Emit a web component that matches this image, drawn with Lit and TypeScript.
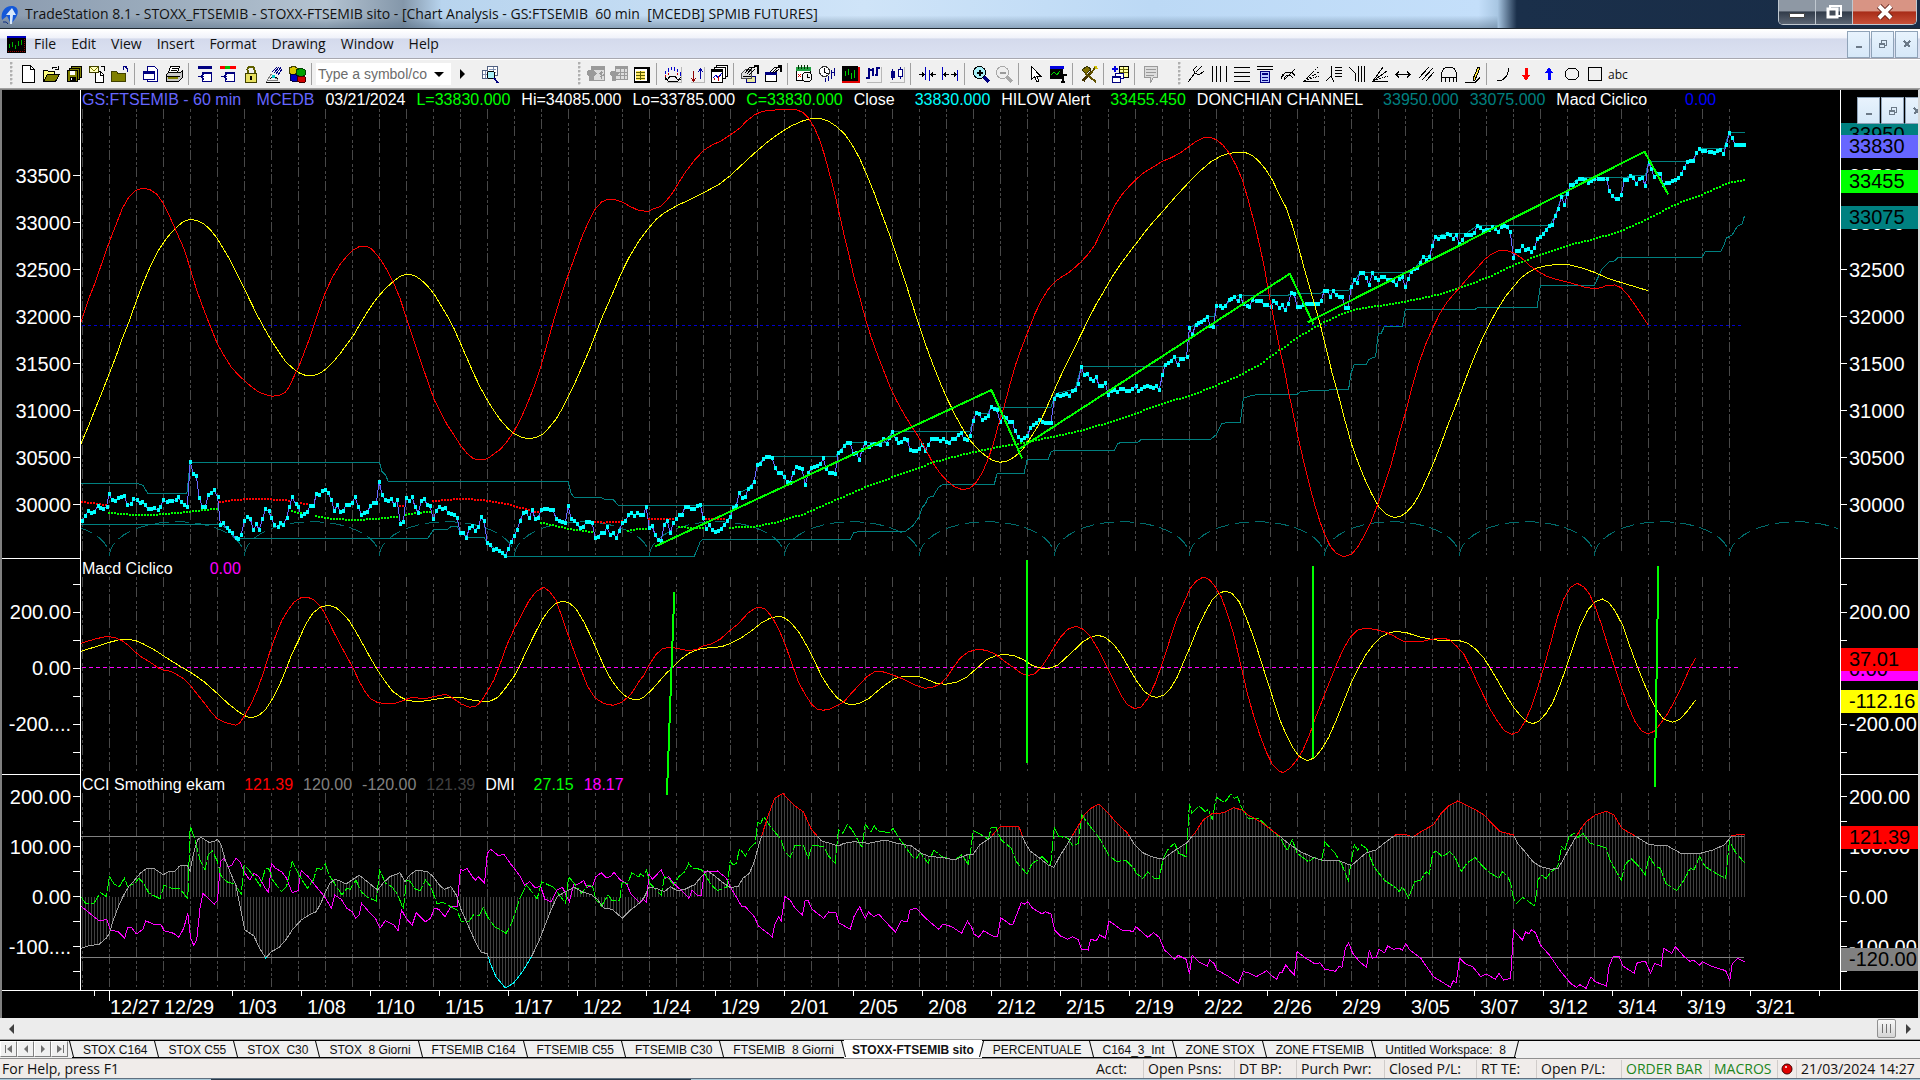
import { LitElement, html, svg, css, nothing } from "lit";
import { customElement, property } from "lit/decorators.js";

type Pt = [number, number];

/* ------------------------------------------------------------------ */
/* Series data                                                         */
/* Curves are digitised in three sheets, 640 plot pixels wide each,    */
/* at 2.45 horizontal and 3 vertical units per plot pixel.             */
/* ------------------------------------------------------------------ */
const UX = 2.45;
const UY = 3;
const PRICE_TOP = 100;
const LOWER_TOP = 550;

function sheet(index: number, top: number, raw: string): Pt[] {
  return raw
    .trim()
    .split(/\s+/)
    .map((pair) => {
      const [x, y] = pair.split(",").map(Number);
      return [index * 640 + x / UX, top + y / UY] as Pt;
    });
}

function series(top: number, ...raw: string[]): Pt[] {
  return raw.flatMap((part, i) => sheet(i, top, part));
}

const RED_PRICE = series(
  PRICE_TOP,
  `198,668 216,600 234,545 252,480 268,425 284,375 300,325 316,290 332,272 348,265 366,268 384,282 400,310 416,350 434,400 452,450 467,510 482,570 498,625 514,675 532,730 548,765 566,800 584,825 600,843 616,860 632,875 650,884 667,889 684,886 698,878 708,862 722,825 732,800 746,755 760,710 772,665 784,620 798,575 815,530 832,495 850,468 864,451 880,440 896,438 910,446 930,474 948,510 964,548 980,595 996,655 1012,715 1030,780 1048,845 1064,900 1080,938 1096,975 1112,1005 1128,1035 1144,1060 1160,1076 1178,1080 1194,1076 1210,1062 1226,1048 1242,1025 1260,993 1278,950 1294,905 1310,855 1326,795 1342,725 1358,655 1374,590 1392,525 1410,465 1426,410 1442,365 1458,328 1474,306 1490,297 1508,299 1524,306 1545,320 1566,332`,
  `20,334 34,326 50,320 66,300 80,278 96,245 112,215 134,180 156,151 178,134 200,122 222,104 244,85 262,62 280,45 296,36 310,32 340,29 384,29 400,38 414,56 428,85 440,120 452,165 464,220 476,275 488,340 500,405 512,465 524,530 538,590 552,655 566,710 582,765 598,815 614,865 630,905 648,945 666,980 684,1014 700,1048 716,1085 734,1118 752,1142 770,1160 790,1169 808,1165 822,1150 838,1120 852,1080 866,1030 878,975 892,920 906,855 920,795 936,740 952,690 968,640 984,600 1000,568 1018,544 1034,530 1050,518 1066,502 1082,484 1098,462 1114,436 1130,395 1148,352 1164,315 1182,282 1198,260 1214,240 1232,220 1256,202 1280,184 1300,174 1322,160 1346,139 1364,123 1380,114 1396,112 1412,119 1428,135 1444,160 1460,195 1476,240 1490,300 1504,365 1518,435 1530,505 1542,590 1555,670 1567,745`,
  `10,805 20,870 32,940 44,1010 56,1075 70,1145 84,1210 98,1265 110,1305 124,1340 138,1360 156,1370 176,1362 190,1342 206,1308 222,1268 240,1212 256,1155 272,1095 290,1010 308,935 324,860 340,790 358,730 376,680 392,640 410,605 426,582 442,560 460,534 480,508 500,480 516,464 534,453 552,451 572,458 592,474 612,497 632,514 652,528 676,538 700,545 724,553 748,562 770,566 786,563 802,556 820,555 836,563 852,585 870,615 886,645 902,675`
);

const YELLOW_PRICE = series(
  PRICE_TOP,
  `198,1032 216,980 234,925 252,870 268,820 284,770 300,715 316,665 334,603 352,545 370,495 386,455 402,425 418,400 434,380 450,364 467,358 484,362 500,372 516,390 532,415 548,448 564,480 582,525 598,565 614,605 632,650 650,690 668,728 684,757 700,785 716,803 732,818 748,826 766,827 782,821 798,808 816,786 834,760 850,733 866,706 882,672 898,640 914,610 930,585 946,564 962,546 980,529 998,522 1014,526 1030,538 1046,556 1064,583 1080,616 1096,648 1112,685 1130,735 1146,780 1162,825 1178,865 1194,900 1210,932 1226,960 1244,985 1260,1001 1278,1012 1296,1016 1314,1012 1330,1002 1346,982 1362,958 1378,925 1396,880 1412,840 1428,795 1444,750 1460,700 1476,650 1492,605 1508,560 1524,515 1542,470 1567,420`,
  `20,386 40,358 60,338 90,317 122,299 156,278 195,252 222,226 250,194 280,160 310,128 340,101 370,78 400,62 424,55 444,56 462,64 482,80 502,103 520,135 538,175 556,225 574,280 592,340 610,400 628,465 646,530 664,600 682,670 700,735 718,795 736,850 754,900 772,945 790,985 808,1020 826,1045 844,1065 862,1080 882,1087 902,1082 920,1068 938,1048 956,1015 974,980 992,935 1010,885 1028,835 1046,790 1064,745 1082,700 1100,655 1118,612 1136,575 1156,532 1176,495 1196,462 1216,430 1246,382 1280,335 1312,290 1346,245 1372,213 1400,184 1424,168 1444,160 1464,157 1486,159 1502,168 1518,186 1534,210 1550,242 1567,286`,
  `16,325 30,375 44,435 58,500 72,560 86,620 100,680 114,750 128,820 144,890 160,965 176,1035 192,1090 208,1138 224,1180 242,1220 260,1243 278,1252 294,1250 310,1237 326,1215 342,1182 358,1140 376,1090 392,1040 410,980 426,930 442,880 460,820 478,765 496,715 514,670 532,630 552,590 572,560 590,534 610,516 630,504 652,497 680,493 710,495 740,504 770,517 806,536 850,553 902,572`
);

const CLOSE = series(
  PRICE_TOP,
  `201,1262 209,1248 216,1232 224,1240 231,1236 239,1218 246,1225 253,1227 261,1220 267,1182 275,1200 282,1202 290,1195 305,1187 312,1216 320,1212 327,1198 335,1200 342,1210 349,1205 356,1214 363,1228 378,1225 386,1230 393,1222 400,1200 408,1206 415,1203 430,1200 437,1192 444,1206 452,1215 459,1221 466,1087 474,1122 481,1128 488,1193 496,1222 503,1220 510,1185 518,1180 525,1170 533,1192 540,1275 547,1270 555,1285 569,1300 577,1315 584,1318 591,1304 599,1262 606,1252 613,1256 621,1290 628,1272 635,1290 643,1258 650,1228 658,1232 665,1255 672,1275 680,1282 687,1268 694,1275 702,1254 709,1220 716,1192 724,1212 731,1222 738,1248 753,1235 760,1218 768,1218 775,1182 782,1185 790,1174 797,1170 804,1178 812,1200 819,1234 826,1215 834,1237 841,1232 848,1215 856,1216 863,1208 870,1192 878,1220 885,1244 892,1240 900,1236 907,1218 914,1208 922,1208 929,1145 936,1185 944,1200 951,1202 958,1197 966,1214 973,1200 981,1273 988,1265 995,1193 1003,1204 1010,1192 1017,1222 1025,1238 1032,1204 1039,1198 1047,1214 1054,1218 1061,1258 1069,1232 1076,1220 1083,1226 1091,1224 1098,1240 1113,1246 1120,1254 1128,1298 1135,1298 1142,1315 1150,1285 1157,1278 1164,1292 1172,1280 1179,1252 1186,1262 1194,1328 1201,1335 1208,1350 1216,1348 1223,1352 1230,1360 1238,1368 1245,1346 1252,1325 1260,1308 1267,1290 1274,1262 1282,1240 1289,1235 1296,1255 1304,1230 1311,1256 1318,1254 1326,1230 1333,1226 1341,1227 1348,1230 1355,1230 1363,1258 1370,1262 1377,1266 1385,1270 1392,1218 1399,1256 1407,1262 1414,1272 1421,1285 1429,1280 1436,1266 1451,1268 1458,1314 1465,1310 1473,1300 1480,1298 1487,1282 1495,1305 1502,1300 1510,1314 1517,1292 1524,1270 1532,1264 1539,1246 1546,1238 1554,1248 1561,1240`,
  `1,1246 8,1245 15,1220 23,1285 30,1278 37,1304 45,1320 52,1322 59,1275 67,1262 74,1300 81,1270 89,1258 96,1245 103,1244 110,1222 118,1220 125,1226 132,1228 140,1219 148,1216 155,1255 162,1288 170,1275 177,1290 184,1296 192,1292 199,1288 206,1275 214,1262 221,1250 229,1225 236,1218 243,1178 251,1195 258,1190 265,1166 272,1160 280,1145 287,1095 295,1092 302,1078 309,1070 317,1072 324,1074 331,1104 339,1120 346,1120 353,1132 361,1145 368,1148 375,1118 383,1100 390,1104 397,1106 405,1155 412,1120 420,1105 427,1100 434,1098 442,1092 449,1075 456,1106 464,1118 471,1120 478,1122 486,1058 493,1052 500,1038 508,1028 515,1030 523,1062 530,1060 537,1080 544,1050 552,1028 560,1042 567,1034 574,1032 589,1034 596,1018 604,1032 611,1015 618,996 626,1018 633,1028 640,1026 648,1018 655,1020 662,1050 670,1052 677,1052 684,1046 692,1034 699,1052 706,1035 714,1018 728,1016 736,1024 743,1017 750,1026 758,1028 765,1017 772,1016 780,1004 787,998 794,1018 802,1020 809,1008 816,962 824,940 831,942 838,960 846,955 853,948 860,922 868,928 875,930 882,965 890,952 897,955 904,966 912,965 919,994 926,1010 934,1020 941,1014 949,1008 956,985 963,975 971,970 978,960 985,966 993,968 1000,968 1007,968 1015,898 1022,884 1029,888 1037,886 1044,882 1051,888 1059,874 1066,870 1073,852 1081,800 1088,824 1096,822 1103,838 1110,842 1118,832 1125,858 1132,858 1140,848 1147,885 1155,872 1162,870 1169,876 1177,868 1184,868 1191,872 1199,874 1206,868 1214,858 1221,874 1228,868 1236,860 1243,858 1250,862 1258,864 1265,858 1272,870 1280,825 1287,794 1294,790 1302,784 1309,772 1317,795 1324,778 1331,776 1339,770 1346,684 1353,705 1361,675 1368,668 1375,666 1383,660 1390,650 1397,678 1405,682 1412,618 1420,618 1427,625 1434,618 1442,600 1449,598 1456,590 1464,604 1471,588 1478,612 1486,618 1493,620 1500,600 1508,602 1515,604 1522,604 1530,616 1537,615 1545,620 1552,602 1559,608 1566,624`,
  `5,615 12,630 20,612 27,580 35,583 42,620 50,620 57,614 64,612 72,612 79,612 86,611 94,612 101,602 108,572 116,572 123,590 130,574 138,586 145,590 152,590 160,624 167,624 174,562 182,540 189,548 196,518 204,518 211,535 218,555 226,520 233,534 241,540 248,530 255,532 263,540 270,540 277,542 285,556 292,536 299,532 307,560 314,536 321,516 329,508 336,504 343,490 351,470 358,480 366,472 373,438 380,412 388,416 395,412 402,412 410,402 417,405 424,416 432,406 439,432 447,420 454,405 461,406 469,405 476,398 483,378 490,384 498,392 505,390 512,390 520,382 527,386 535,395 542,380 549,378 557,382 564,396 572,474 579,452 586,452 594,438 601,450 608,448 616,455 623,445 630,418 638,412 645,402 652,390 660,378 667,376 674,348 682,326 689,292 697,314 704,282 711,255 718,254 726,245 733,236 740,238 748,240 755,250 762,242 770,238 778,238 785,237 792,236 800,238 807,272 814,288 822,297 829,298 836,285 844,240 851,240 858,228 866,234 873,252 880,238 888,234 895,258 903,185 910,208 917,232 924,222 932,222 939,255 946,250 954,248 961,244 968,240 976,235 983,222 990,204 998,185 1005,184 1012,182 1020,160 1027,147 1035,152 1042,154 1050,157 1057,156 1064,160 1071,154 1079,150 1086,162 1093,136 1101,98 1108,114 1115,135 1122,135 1130,135 1138,135`
);

const DONCHIAN_HIGH = series(
  PRICE_TOP,
  `198,1150 336,1150 350,1156 362,1180 458,1180 466,1087 930,1087 936,1115 944,1124 951,1144 1392,1144 1399,1180 1407,1192 1470,1192 1480,1197 1502,1198 1514,1216 1567,1216`,
  `0,1216 236,1216 243,1178 265,1166 280,1145 287,1095 309,1070 480,1070 486,1055 508,1027 600,1027 611,1010 618,994 808,994 816,960 824,940 853,940 860,922 1007,922 1015,890 1022,880 1066,868 1081,800 1280,800 1287,794 1309,772 1339,772 1346,684 1368,668 1390,650 1407,650 1412,618 1434,618 1456,590 1471,586 1567,586`,
  `0,586 20,586 27,580 100,580 108,572 167,572 174,562 196,517 318,517 329,508 351,470 366,470 373,438 380,410 410,400 454,402 483,377 660,377 674,348 689,292 704,282 711,255 733,234 790,232 850,232 858,227 895,227 903,184 1012,184 1027,145 1088,145 1101,97 1138,97`
);

const DONCHIAN_LOW = series(
  PRICE_TOP,
  `198,1273 540,1273 555,1285 577,1315 1048,1315 1063,1288 1096,1288 1106,1279 1120,1279 1128,1298 1145,1312 1186,1312 1194,1328 1238,1369 1567,1369`,
  `0,1369 133,1369 148,1324 155,1318 516,1318 523,1298 540,1294 650,1294 668,1278 684,1250 692,1222 700,1210 706,1192 718,1189 730,1164 742,1153 868,1153 875,1120 941,1120 949,1078 1000,1078 1007,1056 1015,1051 1162,1051 1170,1032 1178,1027 1220,1027 1228,1018 1398,1018 1412,1004 1425,972 1440,967 1471,967 1478,895 1500,886 1520,883 1567,883`,
  `0,883 42,883 50,875 68,874 70,871 118,871 122,868 168,868 174,820 182,793 212,793 218,778 234,770 241,700 248,700 256,679 300,679 307,628 478,628 484,622 630,622 638,556 770,556 778,535 790,505 806,486 818,484 829,472 1034,472 1042,454 1080,454 1088,435 1093,415 1108,405 1120,380 1132,372 1138,348`
);

const HILOW_UP: Pt[][] = [
  sheet(0, PRICE_TOP, `267,1238 300,1243 370,1245 415,1241 466,1235 533,1226`),
  sheet(0, PRICE_TOP, `716,1232 735,1240`),
  sheet(0, PRICE_TOP, `775,1248 800,1255 860,1260 910,1258 973,1250`),
  sheet(0, PRICE_TOP, `995,1245 1025,1238 1055,1236`),
  sheet(0, PRICE_TOP, `1326,1268 1370,1280 1392,1287 1451,1296`),
  series(PRICE_TOP, `1539,1292 1566,1286`, `16,1286`),
  sheet(1, PRICE_TOP, `96,1282 155,1284`),
  series(
    PRICE_TOP,
    `1789,1283`,
    `280,1280 330,1268 400,1243 480,1200 552,1162 640,1122 720,1087 790,1064 870,1043 940,1028 1015,1010 1090,989 1150,967 1220,938 1280,911 1350,886 1410,858 1470,826 1520,793 1567,750`,
    `5,746 50,708 100,672 140,648 180,630 240,618 310,604 375,588 440,564 510,532 570,497 640,463 700,438 770,417 836,393 900,358 968,314 1035,283 1101,248 1138,240`
  ),
];

const HILOW_DOWN: Pt[][] = [
  sheet(0, PRICE_TOP, `201,1206 261,1215`),
  sheet(0, PRICE_TOP, `540,1206 570,1200 640,1196 709,1202`),
  sheet(0, PRICE_TOP, `738,1210 760,1214`),
  sheet(0, PRICE_TOP, `981,1218 990,1216`),
  sheet(0, PRICE_TOP, `1061,1203 1130,1196 1194,1202 1240,1212 1304,1232 1320,1238`),
  sheet(0, PRICE_TOP, `1458,1266 1480,1268 1524,1264`),
  sheet(1, PRICE_TOP, `23,1258 89,1257`),
  sheet(1, PRICE_TOP, `162,1256 206,1258`),
];

const TREND_LINES: Pt[][] = [
  sheet(1, PRICE_TOP, `36,1340 861,870 936,1075`),
  [...sheet(1, PRICE_TOP, `930,1046`), ...sheet(2, PRICE_TOP, `24,521 82,673`)],
  sheet(2, PRICE_TOP, `68,667 893,155 951,283`),
  sheet(1, LOWER_TOP, `84,126 66,736`),
  sheet(1, LOWER_TOP, `949,30 949,638`),
  sheet(2, LOWER_TOP, `80,48 80,625`),
  sheet(2, LOWER_TOP, `927,48 918,710`),
];

const RED_MACD = series(
  LOWER_TOP,
  `198,280 230,268 262,259 285,264 300,273 316,287 332,307 348,322 372,340 388,354 402,361 418,364 434,374 450,386 467,407 484,434 500,458 516,484 532,506 550,517 578,526 588,518 600,495 616,460 632,415 646,365 660,310 676,255 690,213 706,180 720,157 736,144 754,142 770,150 786,170 800,200 816,242 832,280 848,316 864,352 880,394 896,428 908,446 924,457 944,461 970,459 990,451 1010,442 1040,446 1070,438 1092,433 1110,445 1130,462 1150,472 1166,469 1180,453 1196,420 1210,390 1226,340 1242,285 1260,236 1280,190 1296,152 1314,124 1332,112 1346,124 1362,150 1376,198 1392,255 1408,310 1424,360 1440,410 1458,444 1480,461 1502,466 1522,458 1545,434 1567,392`,
  `10,375 22,346 38,315 54,297 72,292 90,295 120,302 140,298 156,287 172,283 196,268 220,242 240,222 264,190 280,176 292,171 308,178 324,202 340,238 356,284 372,340 388,395 404,432 420,462 434,477 448,481 466,477 484,466 500,455 516,432 536,406 556,380 574,366 590,364 606,369 628,379 650,390 674,405 698,415 716,412 736,402 752,382 768,352 784,325 804,306 826,298 848,301 870,312 892,333 914,352 934,370 950,377 966,372 982,354 998,325 1014,292 1030,262 1048,238 1068,229 1086,238 1104,260 1122,298 1140,340 1160,390 1178,435 1194,464 1212,476 1228,471 1244,445 1262,400 1280,340 1298,270 1314,210 1332,160 1348,115 1364,92 1380,81 1394,88 1408,108 1424,140 1440,195 1456,260 1472,345 1488,430 1504,500 1520,560 1536,610 1550,645 1567,664`,
  `8,668 24,655 40,632 56,600 72,555 88,500 104,450 120,400 138,345 154,300 172,262 190,240 210,234 236,239 260,247 282,260 300,273 350,274 370,268 400,264 416,270 434,290 450,312 466,350 484,400 500,440 516,480 532,512 550,542 568,553 584,545 600,515 616,470 632,410 648,345 664,275 680,200 696,145 712,112 728,100 744,110 758,132 772,170 788,225 804,290 820,350 836,410 852,465 870,515 886,542 902,552 918,543 934,518 950,490 966,455 984,410 1002,360 1018,325`
);

const YELLOW_MACD = series(
  LOWER_TOP,
  `198,304 230,292 268,277 290,270 310,268 330,271 350,281 380,301 410,325 440,348 467,367 500,395 532,430 560,462 584,485 604,500 618,503 634,496 650,480 666,450 684,408 700,360 716,310 732,270 748,225 766,190 784,172 804,166 822,172 838,188 854,210 872,245 890,285 908,325 926,362 944,395 962,424 980,440 996,450 1012,454 1040,453 1070,447 1100,442 1130,442 1150,449 1180,454 1202,453 1220,442 1240,412 1260,378 1276,340 1292,298 1310,252 1328,210 1346,178 1362,160 1380,153 1396,160 1412,178 1430,215 1448,260 1464,305 1480,350 1498,390 1516,420 1534,440 1550,448 1567,448`,
  `10,441 30,418 50,390 66,368 80,352 100,328 122,308 146,297 170,293 200,290 224,279 250,262 276,240 296,220 316,206 336,199 352,202 370,218 390,248 410,290 428,335 446,380 464,415 482,442 500,458 516,464 536,461 560,446 590,415 620,388 644,379 680,379 700,387 724,399 748,403 776,396 800,382 826,354 850,328 872,317 892,313 916,317 940,329 960,346 984,355 1006,354 1024,345 1042,325 1064,300 1086,274 1104,262 1122,256 1140,262 1160,283 1180,315 1200,358 1218,395 1236,425 1252,438 1266,442 1284,435 1300,415 1316,382 1332,335 1348,290 1366,235 1384,188 1402,150 1418,130 1434,123 1450,130 1468,155 1486,205 1504,265 1522,335 1540,405 1556,465 1567,508`,
  `14,550 30,590 46,618 66,632 84,624 102,598 120,560 138,510 156,455 174,400 192,355 210,315 228,285 246,262 264,250 284,244 310,248 340,260 370,268 390,271 440,272 460,280 480,298 500,325 518,360 536,398 556,440 574,475 592,500 606,515 620,521 636,512 652,490 668,458 686,405 702,350 718,290 736,225 754,180 772,155 790,147 806,158 822,185 840,228 856,285 874,345 892,400 908,445 924,482 940,508 962,517 980,508 1000,480 1018,450`
);

const CCI = series(
  LOWER_TOP,
  `198,1195 215,1188 243,1183 260,1165 268,1150 276,1115 290,1070 303,1035 316,1008 330,990 345,968 358,956 378,956 400,974 412,965 428,964 440,948 458,946 466,962 474,910 484,870 492,861 500,868 512,877 524,875 533,868 542,885 552,930 565,970 578,1005 590,1080 600,1140 622,1158 636,1195 651,1224 665,1205 684,1192 700,1170 716,1140 738,1110 760,1093 775,1085 786,1060 798,1025 808,1000 820,988 832,992 848,1002 862,990 880,976 895,990 910,1005 925,1020 938,1000 955,980 980,968 992,995 1003,976 1020,960 1047,965 1060,978 1075,1003 1088,1018 1105,1010 1118,1035 1130,1080 1150,1135 1170,1190 1180,1208 1194,1210 1201,1240 1215,1280 1238,1314 1258,1300 1280,1265 1300,1225 1318,1180 1334,1130 1350,1080 1365,1040 1385,1025 1407,1012 1425,1025 1450,1035 1465,1050 1480,1075 1500,1078 1525,1105 1545,1080 1566,1060`,
  `10,1042 22,1012 40,1015 60,1025 74,1010 92,1022 110,1018 135,1003 150,980 165,962 180,975 200,995 220,1012 240,1010 252,985 268,970 280,935 292,880 304,835 316,790 330,745 350,730 366,752 384,772 400,785 420,838 444,872 486,888 500,880 525,875 560,880 600,870 630,880 665,888 690,910 710,920 740,922 770,930 800,915 816,913 832,885 860,862 870,845 884,829 928,829 942,875 956,903 980,925 1000,945 1014,952 1030,915 1046,885 1060,855 1075,825 1088,795 1105,775 1125,762 1146,788 1165,815 1195,850 1212,885 1234,910 1258,922 1282,928 1300,910 1340,878 1360,848 1380,810 1400,792 1430,788 1455,773 1475,780 1490,795 1520,815 1545,838 1567,858`,
  `20,880 50,905 80,922 108,932 145,932 175,947 195,925 212,908 235,900 255,880 285,853 308,853 325,862 345,845 375,825 395,790 415,766 435,753 455,765 480,780 500,795 515,815 540,845 572,855 582,880 600,905 620,935 638,950 665,958 682,955 700,915 716,880 735,840 750,815 772,795 800,784 818,795 838,835 870,858 905,884 950,888 982,910 1030,910 1060,900 1088,885 1108,856 1138,853`
);

const DMI_PLUS = series(
  LOWER_TOP,
  `198,1040 210,1060 230,1060 246,1028 261,1040 268,980 280,1003 292,1010 305,985 313,1010 330,1000 340,985 352,1000 365,1030 392,1046 402,1005 420,1015 440,1015 460,1046 466,828 478,870 490,930 502,960 510,915 520,902 533,935 540,975 555,995 575,1003 591,1032 598,945 610,960 625,985 638,1008 650,957 658,955 668,990 690,1025 702,1010 716,935 730,970 753,1015 768,990 776,955 788,958 797,942 806,975 825,1010 838,1035 850,1015 858,1018 872,990 885,1025 900,1042 922,1053 930,960 945,1000 960,1010 975,1035 988,1078 996,990 1005,995 1018,1018 1030,1022 1042,990 1056,1010 1070,1060 1086,1058 1120,1080 1130,1115 1148,1115 1160,1095 1174,1098 1184,1073 1195,1102 1212,1130 1240,1150 1255,1115 1272,1050 1290,1005 1316,1047 1327,995 1356,1012 1386,1060 1393,980 1410,1005 1425,1030 1440,1005 1452,1010 1460,1050 1474,1068 1490,1035 1500,1052 1518,1052 1524,998 1538,1000 1548,968 1560,978 1567,978`,
  `1,970 8,978 16,960 24,1000 38,1018 52,1035 60,980 70,985 82,1005 95,980 110,965 119,940 128,955 150,958 160,975 175,1005 190,1022 214,1010 221,932 228,945 236,940 244,895 258,918 272,890 282,880 288,818 296,820 303,800 320,830 345,868 355,905 368,922 380,885 400,885 412,925 422,885 450,890 462,918 478,940 486,840 497,850 508,823 520,840 544,892 552,823 566,845 574,828 582,842 610,848 620,835 632,860 650,890 668,920 676,928 686,908 706,940 720,900 740,920 770,930 788,915 804,942 810,905 816,842 830,850 854,868 860,833 872,832 885,870 910,895 922,935 948,972 960,942 985,920 1006,945 1015,832 1025,858 1048,865 1060,888 1074,880 1082,795 1100,825 1124,862 1148,915 1168,935 1190,930 1210,955 1216,970 1232,985 1244,965 1260,985 1272,985 1282,925 1295,895 1310,880 1320,910 1338,920 1346,762 1352,790 1370,768 1385,785 1392,778 1402,808 1412,742 1432,758 1448,732 1456,745 1464,740 1475,775 1490,805 1515,805 1540,832 1567,862`,
  `1,865 18,902 30,868 42,910 70,935 84,922 102,932 110,876 135,910 152,945 167,992 175,930 182,885 190,900 200,885 212,895 230,950 255,990 285,1015 292,1025 300,1010 315,1043 330,995 345,990 358,965 366,972 374,910 382,903 398,920 416,905 430,925 444,965 458,940 478,922 490,940 510,965 536,985 545,965 558,980 565,1000 572,1045 580,1060 594,1042 606,1052 624,1068 632,990 640,975 652,985 665,965 680,950 690,890 698,900 708,860 720,850 730,862 742,850 760,880 785,888 800,895 808,930 836,990 845,945 860,925 880,950 895,975 904,918 920,950 932,955 945,1000 972,1022 990,990 1005,955 1014,960 1028,920 1042,950 1068,970 1092,985 1101,872 1115,905 1138,938`
);

const DMI_MINUS = series(
  LOWER_TOP,
  `198,1068 215,1085 243,1113 262,1108 270,1140 290,1145 305,1165 313,1132 322,1132 334,1152 350,1138 357,1112 375,1122 395,1125 402,1142 425,1150 438,1162 450,1135 460,1090 467,1165 475,1186 482,1170 490,1075 497,1030 510,1045 525,1062 533,1050 540,935 548,925 560,950 568,945 578,925 588,935 598,965 612,990 622,970 634,980 650,1015 658,1028 665,940 675,955 690,965 702,985 716,1028 730,1022 738,962 755,980 775,1010 795,1040 812,1075 820,1035 836,1048 850,1075 863,1085 872,1105 880,1095 886,1060 900,1080 920,1105 931,1135 944,1112 965,1125 975,1142 984,1080 995,1105 1010,1125 1020,1088 1042,1115 1055,1105 1064,1075 1075,1078 1090,1100 1106,1068 1120,1068 1128,958 1135,962 1144,955 1160,985 1165,990 1172,980 1187,1000 1194,910 1202,898 1222,918 1234,912 1250,940 1275,980 1285,1005 1298,995 1310,1012 1325,1010 1335,1048 1350,1055 1365,1020 1378,1012 1395,1055 1405,1005 1415,1003 1430,992 1438,1012 1452,1008 1460,980 1473,968 1485,983 1496,980 1504,967 1520,990 1535,1000 1545,1030 1567,1058`,
  `8,1048 16,1058 22,972 30,988 52,960 62,985 70,980 82,1000 100,1020 120,1045 128,1020 140,1035 150,1035 158,965 190,963 212,985 222,1012 240,1050 250,1070 258,1070 280,1100 290,1128 324,1160 330,1125 340,1100 346,1112 355,1040 368,1050 380,1075 398,1095 405,1050 412,1052 422,1078 450,1105 462,1086 480,1088 487,1118 515,1138 524,1100 538,1070 552,1105 560,1086 572,1100 585,1093 626,1147 640,1112 655,1115 662,1078 678,1076 700,1105 732,1138 742,1122 764,1130 788,1150 802,1113 812,1130 818,1152 830,1162 842,1142 864,1158 876,1160 884,1103 908,1124 914,1122 934,1058 942,1062 950,1055 962,1075 985,1092 993,1085 1007,1092 1016,1140 1030,1158 1048,1168 1060,1160 1074,1170 1082,1198 1098,1200 1104,1168 1118,1172 1126,1155 1140,1164 1149,1113 1160,1122 1180,1140 1208,1144 1215,1130 1244,1162 1258,1148 1272,1162 1285,1200 1310,1228 1318,1216 1338,1228 1346,1272 1353,1215 1368,1235 1390,1248 1396,1230 1406,1240 1414,1260 1440,1278 1466,1300 1478,1265 1490,1268 1510,1280 1536,1262 1546,1275 1560,1288 1567,1268`,
  `5,1268 14,1245 25,1262 35,1275 42,1205 60,1222 86,1242 98,1238 110,1258 136,1264 145,1248 152,1252 160,1195 168,1178 178,1210 195,1235 212,1252 219,1200 226,1225 236,1222 242,1198 256,1208 264,1188 278,1198 292,1195 300,1200 308,1180 318,1200 345,1225 376,1280 418,1312 424,1292 432,1298 440,1225 455,1242 472,1250 492,1280 505,1272 528,1288 536,1270 548,1290 565,1285 572,1140 594,1170 602,1145 610,1152 616,1140 626,1148 638,1185 660,1215 685,1260 712,1300 726,1312 735,1304 750,1315 762,1280 772,1295 800,1308 806,1250 816,1220 830,1218 840,1248 868,1270 874,1240 886,1235 896,1235 908,1270 918,1240 934,1248 940,1195 960,1210 969,1190 990,1220 1005,1235 1012,1230 1028,1245 1035,1235 1060,1250 1092,1262 1102,1292 1108,1242 1122,1225 1138,1235`
);

/* Geometry of the plot, in plot units */
const FIRST_BAR = 82;
const LAST_BAR = 1744;
const BAR_STEP = 3;
const DAY_STEP = 27;
const DAYS = 62;
const CCI_ZERO = 897;
const CCI_UPPER = 836;
const CCI_LOWER = 957;

const toPath = (pts: Pt[]) =>
  "M" + pts.map(([x, y]) => `${x.toFixed(1)} ${y.toFixed(1)}`).join("L");

function valueAt(pts: Pt[], x: number): number {
  let i = 1;
  while (i < pts.length - 1 && pts[i][0] < x) i++;
  const [x0, y0] = pts[i - 1];
  const [x1, y1] = pts[i];
  const t = x1 === x0 ? 0 : Math.min(1, Math.max(0, (x - x0) / (x1 - x0)));
  return y0 + (y1 - y0) * t;
}

function bars(from: number, to: number): number[] {
  const xs: number[] = [];
  for (let x = from; x <= to; x += BAR_STEP) xs.push(x);
  return xs;
}

function dotPath(pts: Pt[], from: number, to: number, size: number): string {
  return bars(from, to)
    .map((x) => {
      const y = Math.round(valueAt(pts, x));
      return `M${x - 1} ${y - 1}h${size}v${size}h-${size}z`;
    })
    .join("");
}

function closeDots(): string {
  const out: string[] = [];
  CLOSE.forEach(([x, y], i) => {
    const mark = (a: number, b: number) =>
      out.push(`M${Math.round(a) - 1} ${Math.round(b) - 2}h3v4h-3z`);
    if (i > 0 && x - CLOSE[i - 1][0] > 4.5) {
      mark((x + CLOSE[i - 1][0]) / 2, (y + CLOSE[i - 1][1]) / 2);
    }
    mark(x, y);
  });
  return out.join("");
}

const snap = (x: number) => FIRST_BAR + Math.round((x - FIRST_BAR) / BAR_STEP) * BAR_STEP;
const hilowDots = (runs: Pt[][]) =>
  runs.map((r) => dotPath(r, snap(r[0][0]), r[r.length - 1][0] + 1, 2)).join("");

const HISTOGRAM = bars(FIRST_BAR, LAST_BAR)
  .map((x) => `M${x + 0.5} ${CCI_ZERO}V${valueAt(CCI, x).toFixed(0)}`)
  .join("");

const CYCLES = Array.from({ length: 14 }, (_, i) => {
  const x = 109.5 + (i - 1) * 135;
  return `M${x} 556A67 34 0 0 1 ${x + 135} 556`;
});

/* ------------------------------------------------------------------ */
/* Icons, drawn on a 20 x 20 grid                                      */
/* ------------------------------------------------------------------ */
const K = "#000";
const NAVY = "#000080";
const GREY = "#9a9a9a";
const ln = (d: string, c = K, w = 1) =>
  svg`<path d=${d} fill="none" stroke=${c} stroke-width=${w} />`;
const fl = (d: string, c: string, s = "none") => svg`<path d=${d} fill=${c} stroke=${s} />`;

const ICONS: Record<string, unknown> = {
  "New": svg`${fl("M4.500 1.500h8l4 4v13h-12z", "#fff", K)}${ln("M12.500 1.500v4h4")}`,
  "Open": svg`${fl("M2.500 17.500v-11h4l1 1h6v3h4.500l-4 7z", "#ffff80", K)}${fl("M2.500 17.500l4-7h12l-4 7z", "#808000", K)}${ln("M11 4.500q3-3 5.500 0M17.500 2v3.500h-3.500")}`,
  "Save All": svg`${fl("M7.500 2.500h10v11h-10z", "#808000", K)}${fl("M5.500 4.500h10v11h-10z", "#808000", K)}${fl("M3.500 6.500h10v11h-10z", "#808000", K)}${fl("M6 7h5v4h-5z", "#fff")}${fl("M6 13h6v4h-6z", K)}${fl("M7 14h1v2h-1z", "#fff")}`,
  "Send": svg`${fl("M8.500 7.500h5l3 3v8h-8z", "#fff", K)}${fl("M2.500 2.500h9v6h-9z", "#ffffc0", "#404000")}${ln("M3 3l4 4 4-4", "#808000")}${ln("M14 2.500h3.500v4M13.500 7.500v3.500h3")}`,
  "Close Folder": svg`${fl("M1.500 17.500v-10h5l1 1.500h8v8.500z", "#808000", "#404000")}${ln("M17.500 8q1-4-3-5.500M17 2h-4v4", NAVY)}`,
  "Report": svg`${fl("M6.500 2.500h7l3 3v12h-10z", "#fff", NAVY)}${fl("M2.500 7.500h11v8h-11z", "#fff", NAVY)}${fl("M2 7h12v3h-12z", NAVY)}`,
  "Print": svg`${fl("M6.500 2.500h9l-2 6h-9z", "#fff", K)}${ln("M7.500 4.500h6M6.500 6.500h6")}${fl("M2.500 10.500l2-2h12l2-2v7l-4 4h-12z", "#c8c8c8", K)}${fl("M4 13h10v2h-10z", "#808000")}${ln("M2.500 12.500h13M15 17l3-3")}`,
  "Insert Analysis": svg`${fl("M3 2h14v3h-14z", NAVY)}${fl("M7.500 8.500h9v9h-9z", "#fff", NAVY)}${fl("M7 8h10v2h-10z", NAVY)}${ln("M3 12.500h6M9 9.500l-3 3 3 3", NAVY)}`,
  "Insert Strategy": svg`${fl("M2 2h5v3h-5z", "#f00")}${fl("M7 2h5v3h-5z", "#00c000")}${fl("M12 2h6v3h-6z", "#f00")}${fl("M7.500 8.500h9v9h-9z", "#fff", NAVY)}${fl("M7 8h10v2h-10z", NAVY)}${ln("M3 12.500h6M9 9.500l-3 3 3 3", NAVY)}`,
  "Lock": svg`${fl("M4.500 9.500h11v9h-11z", "#e8e060", "#404000")}${ln("M6.500 9v-3.500q0-3 3.500-3t3.500 3v3.500", "#606000", 2)}${fl("M9 12h2v4h-2z", K)}`,
  "Satellite": svg`${ln("M10 9l5-6M12 10l5-7M14 11l4-6M8 8l5-5", NAVY)}${ln("M3 17l4-7 7 6z", "#808080")}${ln("M6 15q3-5 8 0M2 18h14", K)}${fl("M8 11h3v3h-3z", "#0cc")}`,
  "Cubes": svg`${fl("M2 4l5-2 3 2v5l-4 2-4-2z", "#d8c800", "#404000")}${fl("M9 6l5-2 4 2v5l-4 2-5-2z", "#00a000", "#004000")}${fl("M3 11l4-1 4 2v5l-4 1-4-2z", "#0000c0", "#000040")}${fl("M10 13l4-1 4 1v5l-4 1-4-2z", "#d00000", "#400000")}`,
  "Symbol Lookup": svg`${fl("M2.500 6.500h8v8h-8z", "#fff", "#506080")}${fl("M7.500 2.500h10v9h-10z", "#fff", "#506080")}${ln("M9 5h7M9 8h7M3 10h4M5 7v7M13 3v8", "#8090b0")}<circle cx="11" cy="11" r="4" fill="#a8f0f8" stroke="#000" />${ln("M14 14l4 5", NAVY, 2)}`,
  "Time and Sales": svg`${fl("M5.500 2.500h13v14h-13z", "#ddd", GREY)}${fl("M5 2h14v4h-14z", GREY)}${ln("M15 7v8M17 8.500q-3-1-3 1t3 1.500-3 2", GREY)}${fl("M1 7q4-3 8 0l2 3-3 2v5h-5v-4l-2-2z", GREY)}`,
  "Matrix": svg`${fl("M6.500 2.500h12v13h-12z", "#ddd", GREY)}${fl("M6 2h13v3h-13z", GREY)}${ln("M7 8.500h11M7 11.500h11M11 5v10M15 5v10", GREY)}${fl("M1 8q4-3 7 0l2 2-3 2v5h-4v-4l-2-2z", GREY)}`,
  "Chart Window": svg`${fl("M2.500 3.500h15v14h-15z", "#fff", K)}${fl("M2 3h16v2h-16z", K)}${fl("M4 7h9v9h-9z", "#ffe860")}${ln("M4 8.500h9M4 11.500h9M4 14.500h9M8.500 7v9", "#606000")}${ln("M15.500 5v12M2 17.500h16", K, 2)}`,
  "Indicator": svg`${ln("M2.500 7v3M5.500 4v4M8.500 3v3M11.500 3v4M14.500 5v3M17.500 8v4", "#00c")}${ln("M2.500 11v2M5.500 9v2M14.500 9v2", "#c00")}${ln("M2 16l3-1 2-3h5l2 3 4 1M2 13l3 4h10l3-4", K)}${ln("M18.500 3v15.500h-15", "#b8b8b8")}`,
  "Buy Sell": svg`${ln("M7.500 7v10M5 14l2.500 3 2.500-3", "#900000")}${ln("M14.500 5v10M12 8l2.500-3 2.500 3", "#0000a0")}${ln("M18.500 3v15.500h-14", "#b8b8b8")}`,
  "Analysis Set": svg`${fl("M7.500 1.500h11v11h-11z", "#fff", K)}${fl("M5.500 3.500h11v11h-11z", "#fff", K)}${fl("M2.500 6.500h11v12h-11z", "#fff", K)}${fl("M2 5h12v3h-12z", K)}${ln("M4 14l3-3 2 3 4-5", "#0000c0")}${ln("M5 16v-2M9.500 12v5", "#c00")}`,
  "Format Strategy": svg`${fl("M6.500 12.500h9v6h-9z", "#e8e8a0", NAVY)}${fl("M1.500 9.500l4-4h6v9h-10z", "#ddd", "#505050")}${ln("M5 9l5-6h5M7 10l5-6M9 11l6-6M3 12h8", K)}${ln("M14 2h4v8", K, 2)}`,
  "Format Symbol": svg`${fl("M2.500 8.500h11v9h-11z", "#fff", K)}${fl("M2 8h12v3h-12z", NAVY)}${ln("M7 8l5-5h5M9 9l5-5M11 9l5-4", K)}${ln("M15 2h3v6", K, 2)}`,
  "Session": svg`${fl("M2.500 3.500h14v13h-14z", "#fff", K)}${fl("M2 3h15v4h-15z", "#20a040")}${ln("M4.500 1v4M7.500 1v4M10.500 1v4M13.500 1v4", "#003000")}${ln("M4 10l3 3M7 10l-3 3", "#e00000")}<circle cx="13" cy="13" r="5" fill="#f4f4f4" stroke="#000" />${ln("M13 10v3.500h3")}`,
  "Interval": svg`<circle cx="7.500" cy="7.500" r="5" fill="#fff" stroke="#333" />${ln("M7.500 4v4l3 2")}${ln("M8.500 14v4M11.500 12v5M14.500 6v9M17.500 4v8M14 8h3", NAVY)}`,
  "Chart Colors": svg`${fl("M2 2h16v16h-16z", K)}${ln("M1.500 17.500h17v-15", "#e00000", 2)}${ln("M5.500 7v5M8.500 5v6M11.500 9v6M14.500 6v8", "#00d000")}`,
  "OHLC Bars": svg`${ln("M3 14h3M6 4v11M6 6h4M10 4v8M12 11h2M14 3v9M14 4h3", NAVY, 2)}${ln("M18.500 3v15.500h-15", "#b8b8b8")}`,
  "Candlesticks": svg`${ln("M6.500 5v11M14.500 3v12", NAVY)}${fl("M5 7h4v7h-4z", NAVY)}${fl("M12.500 5.500h4v7h-4z", "#fff", NAVY)}${ln("M18.500 3v15.500h-15", "#b8b8b8")}`,
  "Decrease Spacing": svg`${ln("M8.500 3v13M12.500 6v11", "#0000c0")}${ln("M2 10.500h5M5 8.500l2 2-2 2M19 10.500h-5M16 8.500l-2 2 2 2")}`,
  "Increase Spacing": svg`${ln("M2.500 3v13M17.500 6v11", "#0000c0")}${ln("M4 10.500h5M6 8.500l-2 2 2 2M16 10.500h-5M14 8.500l2 2-2 2")}`,
  "Zoom In": svg`<circle cx="8.500" cy="8.500" r="6" fill="#a8f0f8" stroke="#000" />${ln("M5.500 8.500h6M8.500 5.500v6", K, 2)}${ln("M13 13l5 5", NAVY, 3)}`,
  "Zoom Out": svg`<circle cx="8.500" cy="8.500" r="6" fill="#eee" stroke="#a8a8a8" />${ln("M5.500 8.500h6", GREY, 2)}${ln("M13 13l5 5", "#a8a8a8", 3)}`,
  "Pointer": svg`${fl("M6.500 2.500v13l3-3 2.500 5.500 2-1-2.500-5h4z", "#fff", K)}`,
  "Data Tip": svg`${fl("M2 3h13v12h-13z", K)}${fl("M2 2h14v3h-14z", "#0000e0")}${ln("M3 11l3-3 3 3 3-4", "#00d000")}${ln("M11 10.500h8M15 10v8M13 17.500h4", K, 2)}`,
  "Tools": svg`${ln("M4 17l9-10", "#403000", 3)}${fl("M3 6l5-4 4 3-5 5z", "#807000", "#303000")}${ln("M6 9l11 9M17 3l-6 7", "#605000", 2)}${ln("M16 2l2 3", "#d0c000", 2)}`,
  "Add Window": svg`${ln("M2 4.500h6M5 1.500v6", "#0000e0", 2)}${fl("M9.500 2.500h9v11h-9z", "#ffffa0", K)}${ln("M10 5.500h8M10 8.500h8M13.500 3v10", "#606000")}${fl("M5.500 9.500h8v5h-8z", "#fff", NAVY)}${fl("M2.500 12.500h8v6h-8z", "#fff", NAVY)}${fl("M2 12h9v2h-9z", NAVY)}`,
  "Note": svg`${fl("M3.500 2.500h13v11h-4l-3 5v-5h-6z", "#ddd", GREY)}${ln("M5 5.500h10M5 8.500h10M5 11.500h8", GREY)}`,
  "Pitchfork": svg`${ln("M2 18l7-9M9 9l-2-4M9 9l4 2M8 5l3-3M10 8l6-6M13 11l5-4")}`,
  "Vertical Lines": svg`${ln("M3.500 2v16M7.500 2v16M11.500 2v16M17.500 2v16")}`,
  "Horizontal Lines": svg`${ln("M2 3.500h16M2 8.500h16M2 12.500h16M2 17.500h16")}`,
  "Calculator": svg`${ln("M2 2.500h16M2 5.500h16", K)}${fl("M5.500 7.500h9v11h-9z", "#b8c8ff", NAVY)}${fl("M7 9h6v2h-6z", NAVY)}${ln("M7 13h6M7 16h6", NAVY)}`,
  "Speed Resistance Arcs": svg`${ln("M3 15q2-7 8-7 4 0 6 4M6 15q1-4 5-4 2 0 4 3M6 16l11-11M4 10l2 2")}`,
  "Fan Lines": svg`${svg`<path d="M3 17L17 3M3 17L18 8M3 17L18 12" fill="none" stroke="#000" stroke-dasharray="2 1" />`}${ln("M2 17.500h16")}`,
  "Price Retracement": svg`${ln("M2 17l5-5 3 6M7.500 12v-10M11 3.500h7M11 6.500h7M11 9.500h7M11 12.500h7")}`,
  "Time Retracement": svg`${ln("M2 3l6 6M8.500 9v8M11.500 2v16M14.500 2v16M17.500 2v16")}`,
  "Gann Fan": svg`${ln("M2 17.500h16M3 17l10-14M3 17L17 7")}${svg`<path d="M3 17L18 12" fill="none" stroke="#000" stroke-dasharray="2 1" />`}`,
  "Horizontal Arrow": svg`${ln("M3 10.500h14M6 7.500l-3 3 3 3M14 7.500l3 3-3 3")}`,
  "Parallel Lines": svg`${ln("M3 14l10-11M6 16l11-12M10 17l8-9")}`,
  "Cycle Arcs": svg`${ln("M2.500 18v-8q1-7 7.500-7t7.500 7v8M3 14q2-2 3 0v4M6 14q2-2 4 0v4M10 14q2-2 4 0v4M14 14q2-2 3 0")}`,
  "Trend Pencil": svg`${ln("M3 18.500h10l5-5")}${fl("M11 15l5-12 2 1-5 12-2 1z", "#ffe840", K)}`,
  "Arc": svg`${ln("M4 17q10 0 12-13")}`,
  "Down Arrow": svg`${ln("M10 4v9", "#f00", 3)}${fl("M6 11h8l-4 6z", "#f00")}`,
  "Up Arrow": svg`${ln("M10 16v-9", "#00f", 3)}${fl("M6 9h8l-4-6z", "#00f")}`,
  "Ellipse": svg`<ellipse cx="10" cy="10" rx="7" ry="6" fill="none" stroke="#000" />`,
  "Rectangle": svg`${ln("M3.500 3.500h13v13h-13z")}`,
};

const BAR_ONE = ["New", "Open", "Save All", "Send", "Close Folder", "|", "Report", "Print", "|", "Insert Analysis", "Insert Strategy", "Lock", "Satellite", "Cubes", "|"];
const BAR_TWO = ["Time and Sales", "Matrix", "Chart Window", "|", "Indicator", "Buy Sell", "Analysis Set", "|", "Format Strategy", "Format Symbol", "|", "Session", "Interval", "Chart Colors", "OHLC Bars", "Candlesticks", "|", "Decrease Spacing", "Increase Spacing", "|", "Zoom In", "Zoom Out", "|", "Pointer", "Data Tip", "|", "Tools", "|", "Add Window", "|", "Note"];
const BAR_THREE = ["Pitchfork", "Vertical Lines", "Horizontal Lines", "Calculator", "Speed Resistance Arcs", "Fan Lines", "Price Retracement", "Time Retracement", "Gann Fan", "Horizontal Arrow", "Parallel Lines", "Cycle Arcs", "Trend Pencil", "|", "Arc", "Down Arrow", "Up Arrow", "Ellipse", "Rectangle"];

@customElement("tool-strip")
class ToolStrip extends LitElement {
  @property({ attribute: false }) items: string[] = [];

  static styles = css`
    :host { display: flex; align-items: center; }
    .tool { width: 23px; height: 24px; padding: 0; border: 0; background: none; display: grid; place-items: center; }
    .glyph { width: 20px; height: 20px; shape-rendering: crispEdges; }
    .rule { width: 1px; height: 22px; margin: 0 4px 0 3px; background: #a0a0a0; }
  `;

  render() {
    return this.items.map((name) =>
      name === "|"
        ? html`<span class="rule"></span>`
        : html`<button class="tool" aria-label=${name}>
            <svg class="glyph" viewBox="0 0 20 20" aria-hidden="true">${ICONS[name]}</svg>
          </button>`
    );
  }
}

@customElement("mdi-buttons")
class MdiButtons extends LitElement {
  static styles = css`
    :host { display: flex; gap: 1px; }
    .box { width: 23px; height: 27px; padding: 0; border: 1px solid #8fa3b8; background: linear-gradient(#e8f3fd, #d6e8f8); display: grid; place-items: center; flex: none; }
    .glyph { width: 12px; height: 12px; shape-rendering: crispEdges; }
  `;
  render() {
    const shape = (d: string, w = 1) =>
      svg`<path d=${d} fill="none" stroke="#6c7a88" stroke-width=${w} />`;
    return html`
      <button class="box" aria-label="Minimize chart"><svg class="glyph" viewBox="0 0 12 12">${shape("M3 9h6", 2)}</svg></button>
      <button class="box" aria-label="Restore chart"><svg class="glyph" viewBox="0 0 12 12">${shape("M2.500 5.500h5v4h-5zM2 6h6M4.500 5v-3h5v5h-2M4 2.500h6")}</svg></button>
      <button class="box" aria-label="Close chart"><svg class="glyph" viewBox="0 0 12 12">${shape("M3 3l6 6M9 3l-6 6", 2)}</svg></button>
    `;
  }
}

/* ------------------------------------------------------------------ */
/* Chart                                                               */
/* ------------------------------------------------------------------ */
type Legend = [text: string, color: string, value?: boolean];

const LEGENDS: Legend[][] = [
  [
    ["GS:FTSEMIB - 60 min ", "#6666ff"],
    ["MCEDB", "#6666ff"],
    ["03/21/2024", "#fff"],
    ["L=33830.000", "#00ff00"],
    ["Hi=34085.000", "#fff"],
    ["Lo=33785.000", "#fff"],
    ["C=33830.000", "#00ff00"],
    ["Close", "#fff"],
    ["33830.000", "#00ffff", true],
    ["HILOW Alert", "#fff"],
    ["33455.450", "#00ff00", true],
    ["DONCHIAN CHANNEL", "#fff"],
    ["33950.000", "#008080", true],
    ["33075.000", "#008080"],
    ["Macd Ciclico", "#fff"],
    ["0.00", "#0000ff", true],
  ],
  [
    ["Macd Ciclico", "#fff"],
    ["0.00", "#ff00ff", true],
  ],
  [
    ["CCI Smothing ekam", "#fff"],
    ["121.39", "#ff0000", true],
    ["120.00", "#808080"],
    ["-120.00", "#808080"],
    ["121.39", "#404040"],
    ["DMI", "#fff"],
    ["27.15", "#00ff00", true],
    ["18.17", "#ff00ff"],
  ],
];

const LEFT_SCALES = [
  ["33500", "33000", "32500", "32000", "31500", "31000", "30500", "30000"],
  ["", "200.00", "", "0.00", "", "-200....", ""],
  ["200.00", "", "100.00", "", "0.00", "", "-100....", ""],
];
const RIGHT_SCALES = [
  LEFT_SCALES[0],
  ["", "200.00", "", "0.00", "", "-200.00", ""],
  ["200.00", "", "100.00", "", "0.00", "", "-100.00", ""],
];

type Tag = [text: string, background: string, top: number];
const TAGS: Tag[][] = [
  [
    ["33950", "#008080", 33],
    ["33830", "#6666ff", 45],
    ["33455", "#00ff00", 80],
    ["33075", "#008080", 116],
  ],
  [
    ["0.00", "#ff00ff", 99],
    ["37.01", "#ff0000", 89],
    ["-112.16", "#ffff00", 131],
  ],
  [
    ["121.39", "#ff0000", 51],
    ["-120.00", "#808080", 173],
  ],
];

const DATES = ["1/03", "1/08", "1/10", "1/15", "1/17", "1/22", "1/24", "1/29", "2/01", "2/05", "2/08", "2/12", "2/15", "2/19", "2/22", "2/26", "2/29", "3/05", "3/07", "3/12", "3/14", "3/19", "3/21", ""];

@customElement("chart-window")
class ChartWindow extends LitElement {
  static styles = css`
    :host {
      display: grid;
      grid-template-columns: 78px minmax(0, 1fr) 77px;
      grid-template-rows: minmax(0, 469fr) minmax(0, 216fr) minmax(0, 215fr) minmax(0, 28fr);
      background: #000;
      color: #fff;
      font-family: "Liberation Sans", Arial, sans-serif;
      border-top: 1px solid #808080;
      border-left: 2px solid #808080;
      border-right: 2px solid #d8d8d8;
      overflow: hidden;
    }
    .plot { grid-column: 2; grid-row: 1 / 4; width: 100%; height: 100%; min-height: 0; box-sizing: border-box; border-left: 1px solid #fff; border-right: 1px solid #fff; display: block; }
    .crisp { shape-rendering: crispEdges; }
    .legend { grid-column: 2; display: flex; gap: 10px; padding: 0 0 0 2px; height: 20px; font-size: 16px; line-height: 20px; white-space: pre; z-index: 1; }
    .legend.r1 { gap: 11px; }
    .legend.r1, .side.r1 { grid-row: 1; }
    .legend.r2, .side.r2 { grid-row: 2; }
    .legend.r3, .side.r3 { grid-row: 3; }
    .value { margin-left: 9px; }
    .far { margin-left: 27px; }
    .side { position: relative; font-size: 20px; border-bottom: 1px solid #fff; display: flex; flex-direction: column; }
    .side.r1 { padding-top: 62px; --step: 47px; }
    .side.r2 { padding-top: 11px; --step: 28px; }
    .side.r3 { padding-top: 9px; --step: 25px; border-bottom: 0; }
    .left { grid-column: 1; }
    .right { grid-column: 3; }
    .mark { display: flex; align-items: center; gap: 2px; height: var(--step); line-height: 24px; white-space: nowrap; }
    .left .mark { justify-content: flex-end; }
    .mark::after { content: ""; width: 7px; height: 1px; background: #fff; }
    .right .mark::after { order: -1; width: 6px; }
    .tag { position: absolute; left: 0; right: 0; height: 23px; line-height: 23px; padding-left: 8px; color: #000; overflow: hidden; }
    .child { position: absolute; left: 16px; top: 7px; }
    .dates { grid-column: 1 / 4; grid-row: 4; display: flex; border-top: 1px solid #fff; font-size: 20px; line-height: 32px; overflow: hidden; }
    .date { width: 69px; flex: none; box-sizing: border-box; padding-left: 6px; background: linear-gradient(#fff, #fff) 0 0 / 1px 5px no-repeat; }
    .lead { width: 92px; flex: none; }
    .short { width: 15px; }
    .first { width: 54px; padding-left: 1px; background-size: 1px 10px; }
    .second { background: none; padding-left: 1px; }
  `;

  private plot() {
    const day = (i: number) => FIRST_BAR + i * DAY_STEP + 0.5;
    return svg`
      <defs>
        <clipPath id="above"><rect x="81" y="775" width="1759" height=${CCI_UPPER - 775} /></clipPath>
        <clipPath id="between"><rect x="81" y=${CCI_UPPER} width="1759" height=${CCI_LOWER - CCI_UPPER} /></clipPath>
        <clipPath id="below"><rect x="81" y=${CCI_LOWER} width="1759" height="33" /></clipPath>
        <clipPath id="price"><rect x="81" y="90" width="1757" height="467" /></clipPath>
      </defs>
      <g class="crisp" fill="none">
        <g stroke="#484848" stroke-dasharray="10 4 3 2 3 2">
          ${Array.from({ length: DAYS }, (_, i) => svg`
            <path d="M${day(i)} 109V555M${day(i)} 577V771M${day(i)} 793V987" stroke-dashoffset=${(i % 3) * 7} />`)}
        </g>
        <path d=${HISTOGRAM} stroke="#404040" />
        <path d="M81 ${CCI_UPPER + 0.5}H${LAST_BAR}M81 ${CCI_LOWER + 0.5}H${LAST_BAR}" stroke="#808080" />
        <path d="M${FIRST_BAR} 325.500H1741" stroke="#0000d0" stroke-dasharray="3 3" />
        <path d="M${FIRST_BAR} 667.500H1741" stroke="#ff00ff" stroke-dasharray="4 3" />

        <g clip-path="url(#price)" stroke="#006c6c">
          ${CYCLES.map((d) => svg`<path d=${d} stroke-dasharray="14 6" />`)}
        </g>
        <path d=${toPath(DONCHIAN_HIGH)} stroke="#008080" />
        <path d=${toPath(DONCHIAN_LOW)} stroke="#008080" />
        <path d=${toPath(CLOSE)} stroke="#6666ff" />
        <path d=${hilowDots(HILOW_UP)} fill="#00ff00" />
        <path d=${hilowDots(HILOW_DOWN)} fill="#ff0000" />
        <path d=${closeDots()} fill="#00ffff" />
        <path d=${toPath(YELLOW_PRICE)} stroke="#ffff00" />
        <path d=${toPath(RED_PRICE)} stroke="#ff0000" />

        <path d=${toPath(YELLOW_MACD)} stroke="#ffff00" />
        <path d=${toPath(RED_MACD)} stroke="#ff0000" />

        <path d=${toPath(DMI_MINUS)} stroke="#ff00ff" />
        <path d=${toPath(DMI_PLUS)} stroke="#00ff00" stroke-dasharray="12 2" />
        <path d=${toPath(CCI)} stroke="#ff0000" clip-path="url(#above)" />
        <path d=${toPath(CCI)} stroke="#a0a0a0" clip-path="url(#between)" />
        <path d=${toPath(CCI)} stroke="#00ffff" clip-path="url(#below)" />

        ${TREND_LINES.map((l) => svg`<path d=${toPath(l)} stroke="#00ff00" stroke-width="2" />`)}
      </g>
    `;
  }

  render() {
    return html`
      <svg class="plot" viewBox="81 90 1759 900" preserveAspectRatio="none" role="img" aria-label="FTSEMIB 60 min">
        ${this.plot()}
      </svg>
      ${LEGENDS.map(
        (items, row) => html`
          <div class="legend r${row + 1}">
            ${items.map(
              ([text, color, value]) =>
                html`<span
                  class=${value ? (text === "0.00" ? "far" : "value") : "name"}
                  style="color:${color}"
                  >${text}</span
                >`
            )}
          </div>
          <div class="side left r${row + 1}">
            ${LEFT_SCALES[row].map((t) => html`<span class="mark">${t}</span>`)}
          </div>
          <div class="side right r${row + 1}">
            ${RIGHT_SCALES[row].map((t) => html`<span class="mark">${t}</span>`)}
            ${TAGS[row].map(([t, bg, top]) => html`<span class="tag" style="background:${bg};top:${top}px">${t}</span>`)}
            ${row === 0 ? html`<mdi-buttons class="child"></mdi-buttons>` : nothing}
          </div>
        `
      )}
      <div class="dates">
        <span class="lead"></span>
        <span class="date short"></span>
        <span class="date first">12/27</span>
        <span class="date second">12/29</span>
        ${DATES.map((d) => html`<span class="date">${d}</span>`)}
      </div>
    `;
  }
}

/* ------------------------------------------------------------------ */
/* Application frame                                                   */
/* ------------------------------------------------------------------ */
const MENUS = ["File", "Edit", "View", "Insert", "Format", "Drawing", "Window", "Help"];
const TABS = ["STOX C164", "STOX C55", "STOX  C30", "STOX  8 Giorni", "FTSEMIB C164", "FTSEMIB C55", "FTSEMIB C30", "FTSEMIB  8 Giorni", "STOXX-FTSEMIB sito", "PERCENTUALE", "C164_3_Int", "ZONE STOX", "ZONE FTSEMIB", "Untitled Workspace:  8"];
const ACTIVE_TAB = 8;
const STATUS: [string, number][] = [
  ["Acct:", 52],
  ["Open Psns:", 91],
  ["DT BP:", 62],
  ["Purch Pwr:", 88],
  ["Closed P/L:", 92],
  ["RT TE:", 60],
  ["Open P/L:", 85],
];

@customElement("app-root")
class AppRoot extends LitElement {
  static styles = css`
    :host { display: flex; flex-direction: column; height: 100vh; overflow: hidden; font-family: "Open Sans", "Segoe UI", sans-serif; font-size: 14px; color: #111; background: #f0f0f0; }
    button, input { font: inherit; color: inherit; }
    .title {
      flex: none; height: 28px; display: flex; align-items: center; border-bottom: 1px solid #202830; padding-right: 3px;
      background:
        linear-gradient(rgba(255, 255, 255, 0) 55%, rgba(70, 95, 120, 0.45)) 0 0 / 78% 100% no-repeat,
        linear-gradient(90deg, #8c9cb0 0%, #9aabbc 8%, #b4c3d1 17%, #8497aa 21%, #b8d4ee 23%, #cfe4f8 45%, #bcd9f5 60%, #c4dffa 77%, #a8c6e2 78%, #1a2f4a 79%, #182c46 100%);
    }
    .logo { width: 20px; height: 24px; flex: none; }
    .caption { margin: 0 0 0 5px; font-size: 14px; font-weight: 400; line-height: 28px; white-space: pre; flex: 1; }
    .frame { display: flex; align-self: flex-start; border: 1px solid #c0c8d0; border-top: 0; border-radius: 0 0 5px 5px; overflow: hidden; }
    .win { height: 24px; width: 37px; padding: 0; border: 0; border-right: 1px solid #c0c8d0; background: linear-gradient(#8e98a4 0 45%, #323c4a 50%, #5c6674); display: grid; place-items: center; }
    .win.close { width: 63px; border-right: 0; background: linear-gradient(#d89484 0 45%, #a82c18 50%, #c85038); }
    .wg { width: 20px; height: 18px; }
    .menu { flex: none; height: 28px; display: flex; align-items: center; gap: 1px; border-top: 1px solid #fff; border-bottom: 1px solid #a8a8b0; background: linear-gradient(#fff, #f0f2fa 28%, #d4daec 32%, #dce2f2); padding: 0 2px 0 7px; }
    .mini { width: 19px; height: 17px; flex: none; }
    .item { padding: 0 7px; border: 0; background: none; font-size: 14px; line-height: 26px; }
    .push { margin-left: auto; }
    .tools { flex: none; height: 30px; display: flex; align-items: center; border-top: 1px solid #fff; background: #f0f0f0; border-bottom: 1px solid #a0a0a0; box-sizing: border-box; }
    .grip { width: 3px; height: 24px; flex: none; background: radial-gradient(circle at 1px 1px, #b0b0b0 1px, transparent 2px) 0 0 / 3px 4px; }
    .group { display: flex; align-items: center; flex: none; }
    .one { width: 578px; padding-left: 10px; box-sizing: border-box; }
    .two { width: 600px; box-sizing: border-box; }
    .strip { margin-left: 3px; }
    .symbol { display: flex; background: #fff; height: 22px; width: 135px; align-items: center; margin-right: 2px; }
    .entry { width: 110px; min-width: 0; border: 0; padding: 0 0 0 2px; background: none; outline: 0; font-family: "Liberation Sans", Arial, sans-serif; font-size: 14px; }
    .entry::placeholder { color: #6c6c6c; opacity: 1; }
    .drop { width: 24px; height: 20px; border: 0; padding: 0; background: none; display: grid; place-items: center; }
    .arrow { width: 10px; height: 10px; }
    .next { width: 18px; }
    .lookup { margin-left: 7px; }
    .abc { border: 0; background: none; padding: 0 2px; font-size: 12px; }
    .chart { flex: 1 1 0; min-height: 0; }
    .scroll { flex: none; height: 21px; border-bottom: 1px solid #a0a0a0; background: #ececec; display: flex; align-items: center; }
    .thumb { width: 19px; height: 19px; box-sizing: border-box; margin-left: auto; border: 1px solid #909090; border-radius: 2px; background: linear-gradient(90deg, transparent 4px, #707070 4px 5px, transparent 5px 8px, #707070 8px 9px, transparent 9px 12px, #707070 12px 13px, transparent 13px) 0 4px / 100% 9px no-repeat, linear-gradient(#f8f8f8, #d4d4d4); }
    .tabs { flex: none; height: 18px; display: flex; border-bottom: 1px solid #909090; background: linear-gradient(#000, #000) 0 0 / 100% 1px no-repeat, #f0f0f0; font-family: "Liberation Sans", Arial, sans-serif; font-size: 12px; }
    .nav { width: 17px; height: 16px; margin-top: 1px; padding: 0; border: 1px solid; border-color: #fff #808080 #808080 #fff; background: #f0f0f0; display: grid; place-items: center; flex: none; }
    .navs { display: flex; width: 72px; flex: none; }
    .tab { position: relative; border: 0; padding: 0 10px 0 11px; background: none; white-space: pre; line-height: 18px; height: 18px; box-sizing: border-box; border-top: 1px solid #000; border-bottom: 1px solid #000; flex: none; }
    .tab::before { content: ""; position: absolute; left: -1px; top: 0; width: 1px; height: 16px; background: #000; transform: skewX(14deg); }
    .tab.on { background: #fff; border-color: #fff; font-weight: 700; padding: 0 8px; }
    .tab.past::before, .tab.last::after { transform: skewX(-14deg); }
    .tab.last::after { content: ""; position: absolute; right: -1px; top: 0; width: 1px; height: 16px; background: #000; }
    .status { flex: none; height: 19px; box-sizing: border-box; padding-top: 1px; display: flex; align-items: center; background: #f0ecea; line-height: 18px; white-space: nowrap; }
    .help { padding-left: 2px; margin-right: auto; }
    .cell { box-sizing: border-box; padding-left: 4px; border-right: 1px solid #d0ccca; flex: none; }
    .order { width: 88px; color: #1c861c; }
    .macros { width: 68px; color: #1c861c; }
    .lamp { width: 19px; height: 18px; display: grid; place-items: center; border-right: 1px solid #d0ccca; box-sizing: border-box; flex: none; }
    .clock { width: 123px; box-sizing: border-box; padding-left: 4px; flex: none; }
    .task { flex: none; height: 2px; background: linear-gradient(90deg, #a8c8d8 0 11%, #283848 11% 36%, #a8c8d8 36%) 0 1px / 100% 1px no-repeat, #607080; }
  `;

  private triangle(d: string, color = "#000") {
    return html`<svg class="arrow" viewBox="0 0 10 10" aria-hidden="true"><path d=${d} fill=${color} /></svg>`;
  }

  private tabClass(i: number) {
    return ["tab", i === ACTIVE_TAB ? "on" : "", i === ACTIVE_TAB + 1 ? "past" : "", i === TABS.length - 1 ? "last" : ""].join(" ");
  }

  render() {
    return html`
      <header class="title">
        <svg class="logo" viewBox="0 0 20 24" aria-hidden="true">
          <path d="M2 18C0 9 6 3 13 4c6 1 6 8 2 13l-4 5-4-8z" fill="#1458d8" />
          <path d="M10 22V13H6l6-7 4 7h-3l-1 9z" fill="#d8e8fa" />
          <path d="M3 20q4-1 5 2" stroke="#0a2a80" fill="none" />
        </svg>
        <h1 class="caption">TradeStation 8.1 - STOXX_FTSEMIB - STOXX-FTSEMIB sito - [Chart Analysis - GS:FTSEMIB  60 min  [MCEDB] SPMIB FUTURES]</h1>
        <div class="frame">
          <button class="win" aria-label="Minimize"><svg class="wg" viewBox="0 0 20 18"><path d="M2.500 10.500h15v4h-15z" fill="#fff" stroke="#444" /></svg></button>
          <button class="win" aria-label="Restore"><svg class="wg" viewBox="0 0 20 18"><path d="M6 3h11v10h-11z" fill="none" stroke="#fff" stroke-width="2" /><path d="M4 6h9v8h-9z" fill="#444c58" stroke="#fff" stroke-width="3" /></svg></button>
          <button class="win close" aria-label="Close"><svg class="wg" viewBox="0 0 20 18"><path d="M4 3l12 12M16 3l-12 12" stroke="#602018" stroke-width="6" /><path d="M4 3l12 12M16 3l-12 12" stroke="#fff" stroke-width="4" /></svg></button>
        </div>
      </header>
      <nav class="menu">
        <svg class="mini" viewBox="0 0 19 17" aria-hidden="true">
          <path d="M0 0h19v17h-19z" fill="#000" /><path d="M0 0h19v2h-19z" fill="#0000c0" />
          <path d="M2.500 8v4M5.500 6v5M8.500 9v4M11.500 5v5M14.500 4v5" stroke="#00b000" /><path d="M1 15.500h17M17.500 3v12" stroke="#900" stroke-dasharray="1 1" />
        </svg>
        ${MENUS.map((m) => html`<button class="item">${m}</button>`)}
        <mdi-buttons class="push"></mdi-buttons>
      </nav>
      <div class="tools">
        <div class="group one">
          <span class="grip"></span>
          <tool-strip class="strip" .items=${BAR_ONE}></tool-strip>
          <div class="symbol">
            <input class="entry" aria-label="Symbol" placeholder="Type a symbol/co" />
            <button class="drop" aria-label="Recent symbols">${this.triangle("M0 3h10l-5 5z")}</button>
          </div>
          <button class="drop next" aria-label="Apply symbol">${this.triangle("M3 0v10l5-5z")}</button>
          <tool-strip class="lookup" .items=${["Symbol Lookup"]}></tool-strip>
        </div>
        <div class="group two">
          <span class="grip"></span>
          <tool-strip class="strip" .items=${BAR_TWO}></tool-strip>
        </div>
        <div class="group">
          <span class="grip"></span>
          <tool-strip class="strip" .items=${BAR_THREE}></tool-strip>
          <button class="abc">abc</button>
        </div>
      </div>
      <chart-window class="chart"></chart-window>
      <div class="scroll">
        <button class="drop" aria-label="Scroll left">${this.triangle("M7 0v10l-5-5z", "#404040")}</button>
        <span class="thumb"></span>
        <button class="drop" aria-label="Scroll right">${this.triangle("M3 0v10l5-5z", "#404040")}</button>
      </div>
      <nav class="tabs">
        <div class="navs">
          <button class="nav" aria-label="First workspace">${this.triangle("M1 1h1v8h-1zM8 1v8l-5-4z", "#707070")}</button>
          <button class="nav" aria-label="Previous workspace">${this.triangle("M7 1v8l-4-4z", "#707070")}</button>
          <button class="nav" aria-label="Next workspace">${this.triangle("M3 1v8l4-4z", "#707070")}</button>
          <button class="nav" aria-label="Last workspace">${this.triangle("M8 1h1v8h-1zM2 1v8l5-4z", "#707070")}</button>
        </div>
        ${TABS.map((t, i) => html`<button class=${this.tabClass(i)}>${t}</button>`)}
      </nav>
      <footer class="status">
        <span class="help">For Help, press F1</span>
        ${STATUS.map(([t, w]) => html`<span class="cell" style="width:${w}px">${t}</span>`)}
        <span class="cell order">ORDER BAR</span>
        <span class="cell macros">MACROS</span>
        <span class="lamp">
          <svg width="14" height="14" viewBox="0 0 14 14" aria-hidden="true">
            <circle cx="7" cy="7" r="5" fill="#e00000" stroke="#400000" /><circle cx="6" cy="5" r="1" fill="#fff" />
          </svg>
        </span>
        <span class="clock">21/03/2024 14:27</span>
      </footer>
      <div class="task"></div>
    `;
  }
}
